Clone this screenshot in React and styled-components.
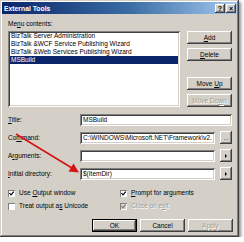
import React from 'react';
import styled, { createGlobalStyle } from 'styled-components';

const GlobalStyle = createGlobalStyle`
  html, body { margin: 0; padding: 0; background: #fff; }
  body {
    font-family: 'Liberation Sans', Arial, sans-serif;
    font-size: 6.5px;
    color: #000;
  }
`;

const raised = `
  box-shadow: inset -1px -1px #404040, inset 1px 1px #fff,
    inset -2px -2px #808080, inset 2px 2px #d4d0c8;
`;

const sunken = `
  box-shadow: inset 1px 1px #808080, inset -1px -1px #fff,
    inset 2px 2px #404040, inset -2px -2px #d4d0c8;
`;

const Window = styled.div`
  position: relative;
  box-sizing: border-box;
  width: 239px;
  height: 237px;
  padding: 2px;
  background: #d4d0c8;
  box-shadow: inset -1px -1px #404040, inset 1px 1px #d4d0c8,
    inset -2px -2px #808080, inset 2px 2px #fff,
    2px 2px 3px rgba(0, 0, 0, 0.45);
  display: flex;
  flex-direction: column;
`;

const TitleBar = styled.div`
  height: 12px;
  display: flex;
  align-items: center;
  justify-content: space-between;
  padding: 0 1px 0 2px;
  background: linear-gradient(90deg, #0a246a 0%, #3a6ea5 55%, #a6caf0 100%);
  color: #fff;
  font-weight: bold;
  font-size: 6.8px;
`;

const Caps = styled.div`
  display: flex;
  gap: 1px;
`;

const CapBtn = styled.div`
  width: 10px;
  height: 9px;
  background: #d4d0c8;
  ${raised}
  color: #000;
  font-size: 7px;
  font-weight: bold;
  line-height: 9px;
  text-align: center;
`;

const Content = styled.div`
  flex: 1;
  display: flex;
  flex-direction: column;
  padding: 6px 4px 0 6px;
`;

const Label = styled.div`
  line-height: 8px;
  white-space: nowrap;
  color: ${p => (p.$disabled ? '#a09c94' : '#000')};
  text-shadow: ${p => (p.$disabled ? '1px 1px #fff' : 'none')};
  u { text-decoration: underline; text-underline-offset: 1px; }
`;

const ListRow = styled.div`
  display: flex;
  gap: 7px;
  margin-top: 3px;
`;

const ListBox = styled.div`
  box-sizing: border-box;
  width: 172px;
  height: 76px;
  background: #fff;
  padding: 1px 2px;
  ${sunken}
`;

const Item = styled.div`
  height: 8px;
  line-height: 8px;
  padding-left: 1px;
  white-space: nowrap;
  overflow: hidden;
  background: ${p => (p.$selected ? '#0a246a' : 'transparent')};
  color: ${p => (p.$selected ? '#fff' : '#000')};
`;

const ButtonCol = styled.div`
  display: flex;
  flex-direction: column;
  gap: 4px;
  .spacer { flex: 1; }
`;

const Button = styled.div`
  box-sizing: border-box;
  width: ${p => p.$w || 45}px;
  height: ${p => p.$h || 13}px;
  display: flex;
  align-items: center;
  justify-content: center;
  background: #d4d0c8;
  ${raised}
  ${p => p.$default && `
    box-shadow: inset 0 0 0 1px #000, inset -2px -2px #404040, inset 2px 2px #fff,
      inset -3px -3px #808080;
  `}
  color: ${p => (p.$disabled ? '#a09c94' : '#000')};
  text-shadow: ${p => (p.$disabled ? '1px 1px #fff' : 'none')};
  white-space: nowrap;
  u { text-decoration: underline; text-underline-offset: 1px; }
`;

const Form = styled.div`
  display: grid;
  grid-template-columns: 72px 135px 5px 12px;
  row-gap: 5px;
  margin-top: 7px;
  align-items: center;
`;

const Field = styled.div`
  box-sizing: border-box;
  grid-column: ${p => (p.$wide ? '2 / 5' : '2')};
  height: 12px;
  background: #fff;
  padding: 0 3px;
  line-height: 12px;
  white-space: nowrap;
  overflow: hidden;
  ${sunken}
`;

const SideButton = styled(Button)`
  grid-column: 4;
  font-size: 6px;
  svg { display: block; }
`;

const Checks = styled.div`
  display: grid;
  grid-template-columns: 112px 1fr;
  row-gap: 5px;
  margin-top: 9px;
`;

const CheckRow = styled.div`
  display: flex;
  align-items: center;
  gap: 4px;
  height: 8px;
`;

const Box = styled.div`
  box-sizing: border-box;
  width: 7px;
  height: 7px;
  background: ${p => (p.$disabled ? '#d4d0c8' : '#fff')};
  box-shadow: inset 1px 1px #808080, inset -1px -1px #fff;
  svg { display: block; }
`;

const Footer = styled.div`
  display: flex;
  justify-content: flex-end;
  gap: 3px;
  margin-top: 9px;
`;

const Overlay = styled.svg`
  position: absolute;
  left: 0;
  top: 0;
  pointer-events: none;
`;

function Check({ checked, disabled, children }) {
  return (
    <CheckRow>
      <Box $disabled={disabled}>
        {checked && (
          <svg width="7" height="7" viewBox="0 0 7 7">
            <path d="M1.5 3.2 L3 4.8 L5.8 1.6" fill="none"
              stroke={disabled ? '#808080' : '#000'} strokeWidth="1.2" />
          </svg>
        )}
      </Box>
      <Label $disabled={disabled}>{children}</Label>
    </CheckRow>
  );
}

function Arrow() {
  return (
    <svg width="4" height="6" viewBox="0 0 4 6">
      <path d="M1 1 L3 3 L1 5 Z" fill="#000" />
    </svg>
  );
}

const items = [
  'BizTalk Server Administration',
  'BizTalk &WCF Service Publishing Wizard',
  'BizTalk &Web Services Publishing Wizard',
  'MSBuild',
];

export default function App() {
  return (
    <>
      <GlobalStyle />
      <Window>
        <TitleBar>
          <span>External Tools</span>
          <Caps>
            <CapBtn>?</CapBtn>
            <CapBtn>×</CapBtn>
          </Caps>
        </TitleBar>
        <Content>
          <Label>Me<u>n</u>u contents:</Label>
          <ListRow>
            <ListBox>
              {items.map((t, i) => (
                <Item key={t} $selected={i === 3}>{t}</Item>
              ))}
            </ListBox>
            <ButtonCol>
              <Button><span><u>A</u>dd</span></Button>
              <Button><span><u>D</u>elete</span></Button>
              <div className="spacer" />
              <Button><span>Move <u>U</u>p</span></Button>
              <Button $disabled><span>Move Do<u>w</u>n</span></Button>
            </ButtonCol>
          </ListRow>
          <Form>
            <Label><u>T</u>itle:</Label>
            <Field $wide>MSBuild</Field>
            <Label>Co<u>m</u>mand:</Label>
            <Field>C:\WINDOWS\Microsoft.NET\Framework\v2.</Field>
            <SideButton $w={12} $h={13}>...</SideButton>
            <Label>A<u>r</u>guments:</Label>
            <Field />
            <SideButton $w={12} $h={13}><Arrow /></SideButton>
            <Label><u>I</u>nitial directory:</Label>
            <Field>$(ItemDir)</Field>
            <SideButton $w={12} $h={13}><Arrow /></SideButton>
          </Form>
          <Checks>
            <Check checked>Use <u>O</u>utput window</Check>
            <Check checked><u>P</u>rompt for arguments</Check>
            <Check>Treat output a<u>s</u> Unicode</Check>
            <Check checked disabled>Close on e<u>x</u>it</Check>
          </Checks>
          <Footer>
            <Button $default>OK</Button>
            <Button>Cancel</Button>
            <Button $disabled>Apply</Button>
          </Footer>
        </Content>
        <Overlay width="239" height="237" viewBox="0 0 239 237">
          <line x1="16" y1="134" x2="72" y2="168" stroke="#d41414" strokeWidth="1.6" />
          <path d="M79 172.5 L68.5 171.5 L73.5 163.5 Z" fill="#d41414" />
        </Overlay>
      </Window>
    </>
  );
}
